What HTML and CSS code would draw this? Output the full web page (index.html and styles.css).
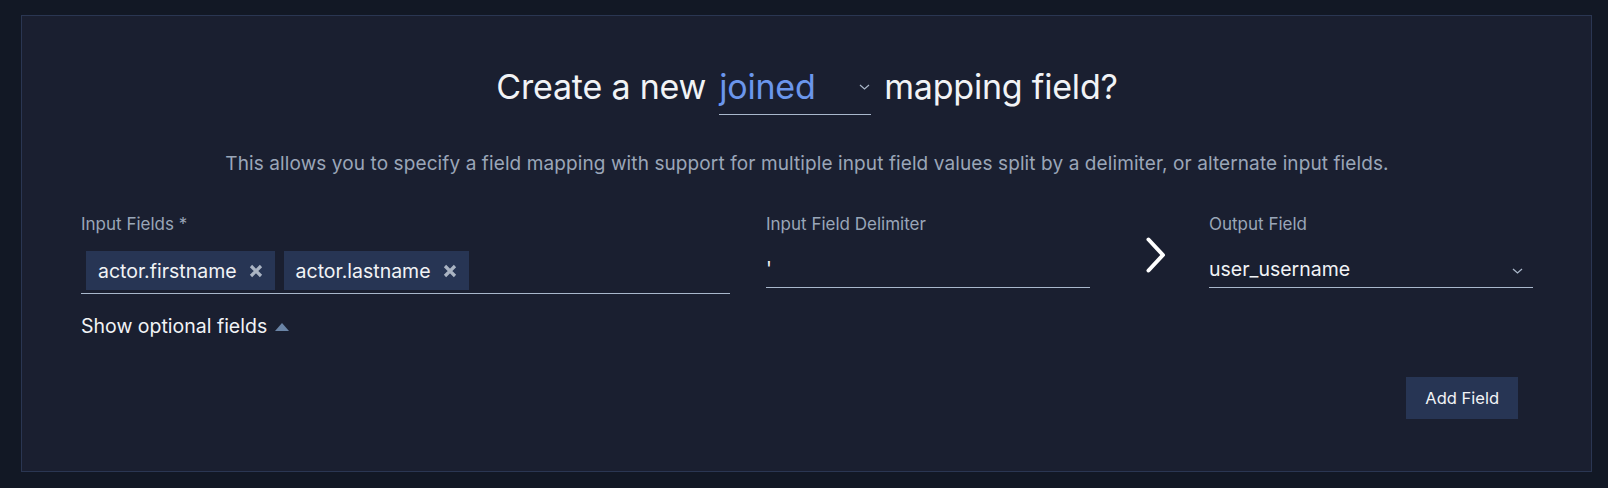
FILE: index.html
```html
<!DOCTYPE html>
<html lang="en">
<head>
<meta charset="utf-8">
<title>Create mapping field</title>
<link rel="stylesheet" href="styles.css">
</head>
<body>
<div class="page">
  <section class="panel">
    <h1 class="title">
      <span>Create a new</span>
      <span class="type-select">
        <span class="type-value">joined</span>
        <svg class="type-chevron" width="11" height="6" viewBox="0 0 11 6"><polyline points="1,1 5.5,5 10,1" fill="none" stroke="#a9b6c8" stroke-width="1.2"/></svg>
      </span>
      <span>mapping field?</span>
    </h1>
    <p class="desc">This allows you to specify a field mapping with support for multiple input field values split by a delimiter, or alternate input fields.</p>

    <div class="fields">
      <div class="col col-input">
        <label class="label">Input Fields *</label>
        <div class="chips">
          <span class="chip">actor.firstname
            <svg class="chip-x" width="14" height="14" viewBox="0 0 14 14"><path d="M2 2 L12 12 M12 2 L2 12" stroke="#aab4c3" stroke-width="3.2"/></svg>
          </span>
          <span class="chip">actor.lastname
            <svg class="chip-x" width="14" height="14" viewBox="0 0 14 14"><path d="M2 2 L12 12 M12 2 L2 12" stroke="#aab4c3" stroke-width="3.2"/></svg>
          </span>
        </div>
        <div class="optional">Show optional fields
          <svg class="tri" width="14" height="8" viewBox="0 0 14 8"><polygon points="7,0 14,8 0,8" fill="#6a84a6"/></svg>
        </div>
      </div>

      <div class="col col-delim">
        <label class="label">Input Field Delimiter</label>
        <div class="text-input"><span class="value">'</span></div>
      </div>

      <div class="arrow-col">
        <svg width="22" height="38" viewBox="0 0 22 38"><polyline points="3.5,3.5 18,19 3.5,34.5" fill="none" stroke="#ffffff" stroke-width="4" stroke-linecap="round" stroke-linejoin="round"/></svg>
      </div>

      <div class="col col-output">
        <label class="label">Output Field</label>
        <div class="text-input">
          <span class="value">user_username</span>
          <svg class="sel-chevron" width="11" height="6" viewBox="0 0 11 6"><polyline points="1,1 5.5,5 10,1" fill="none" stroke="#a9b6c8" stroke-width="1.3"/></svg>
        </div>
      </div>
    </div>

    <div class="actions">
      <button class="btn">Add Field</button>
    </div>
  </section>
</div>
</body>
</html>
```

FILE: styles.css
```css
* { box-sizing: border-box; }

html, body {
  margin: 0;
  padding: 0;
  background: #121825;
  font-family: Inter, "Liberation Sans", sans-serif;
  color: #f1f3f6;
}

.page {
  width: 1608px;
  height: 488px;
  padding: 15px 16px 16px 21px;
}

.panel {
  height: 457px;
  background: #1a1f30;
  border: 1px solid #2a3652;
  padding: 49px 58px 0 59px;
}

.title {
  margin: 0;
  display: flex;
  justify-content: center;
  align-items: baseline;
  gap: 13px;
  font-size: 34px;
  font-weight: 400;
  line-height: 44px;
  letter-spacing: -0.2px;
}

.type-select {
  display: inline-flex;
  align-items: center;
  justify-content: space-between;
  width: 152px;
  padding-bottom: 5px;
  border-bottom: 1px solid #a9b8cc;
}

.type-value {
  color: #6b96ec;
}

.type-chevron {
  margin-right: 1px;
}

.desc {
  margin: 37px 0 0;
  text-align: center;
  font-size: 19px;
  line-height: 24px;
  letter-spacing: 0.1px;
  color: #9aa6b8;
}

.fields {
  display: flex;
  align-items: flex-start;
  margin-top: 38px;
}

.col {
  display: flex;
  flex-direction: column;
}

.col-input { width: 649px; }
.col-delim { width: 324px; margin-left: 36px; }
.col-output { width: 324px; }

.arrow-col {
  width: 119px;
  padding-left: 55px;
  padding-top: 22px;
}

.arrow-col svg { display: block; }

.label {
  font-size: 17px;
  line-height: 20px;
  color: #9aa6b8;
  margin-bottom: 17px;
}

.chips {
  display: flex;
  gap: 9px;
  padding: 0 0 3px 5px;
  border-bottom: 1px solid #a9b8cc;
}

.chip {
  display: inline-flex;
  align-items: center;
  gap: 12px;
  height: 39px;
  padding: 0 12px 0 12px;
  background: #273554;
  font-size: 19.5px;
  color: #f1f3f6;
}

.chip-x { display: block; }

.optional {
  display: flex;
  align-items: center;
  gap: 8px;
  margin-top: 20px;
  font-size: 19.5px;
  line-height: 24px;
  color: #f1f3f6;
}

.tri { display: block; margin-top: 1px; }

.text-input {
  display: flex;
  align-items: flex-end;
  justify-content: space-between;
  height: 37px;
  padding-bottom: 6px;
  border-bottom: 1px solid #a9b8cc;
  font-size: 19.5px;
  line-height: 24px;
  color: #f1f3f6;
}

.sel-chevron { margin: 0 10px 7px 0; }

.actions {
  display: flex;
  justify-content: flex-end;
  padding-right: 15px;
  margin-top: 39px;
}

.btn {
  height: 42px;
  padding: 0 19px;
  border: 0;
  background: #273554;
  color: #f1f3f6;
  font-family: Inter, "Liberation Sans", sans-serif;
  font-size: 16.5px;
}
```
